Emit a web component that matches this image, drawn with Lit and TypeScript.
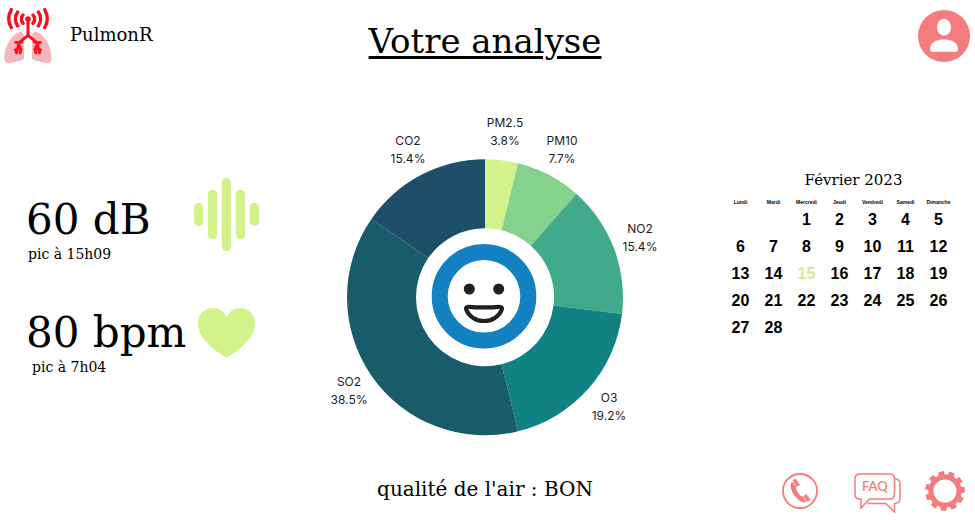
import { LitElement, html, svg, css } from "lit";
import { customElement } from "lit/decorators.js";
import { classMap } from "lit/directives/class-map.js";

interface Slice {
  name: string;
  share: number;
  label: string;
  color: string;
  x: number;
  y: number;
}

const SLICES: Slice[] = [
  { name: "PM2.5", share: 1, label: "3.8%", color: "#d1f389", x: 505, y: 127 },
  { name: "PM10", share: 2, label: "7.7%", color: "#84d28b", x: 562, y: 145 },
  { name: "NO2", share: 4, label: "15.4%", color: "#40ab8b", x: 640, y: 233 },
  { name: "O3", share: 5, label: "19.2%", color: "#118282", x: 609, y: 402 },
  { name: "SO2", share: 10, label: "38.5%", color: "#185b6b", x: 349, y: 386 },
  { name: "CO2", share: 4, label: "15.4%", color: "#1d4e6a", x: 408, y: 145 },
];

@customElement("air-chart")
class AirChart extends LitElement {
  static styles = css`
    :host {
      display: block;
    }
    .chart {
      display: block;
      width: 100%;
    }
    .label {
      font: 12px Inter, "Open Sans", sans-serif;
      text-anchor: middle;
      fill: #1c1c1c;
    }
    .line {
      fill: none;
      stroke: #221f20;
      stroke-width: 4.2;
      stroke-linejoin: round;
    }
    .eye {
      fill: #221f20;
    }
    .ring {
      fill: none;
      stroke: #1281c2;
      stroke-width: 16;
    }
  `;

  private slicePaths() {
    const cx = 485;
    const cy = 297.3;
    const total = SLICES.reduce((sum, s) => sum + s.share, 0);
    const at = (v: number, r: number) => {
      const a = (v / total) * 2 * Math.PI;
      return `${(cx + r * Math.sin(a)).toFixed(2)} ${(cy - r * Math.cos(a)).toFixed(2)}`;
    };
    let start = 0;
    return SLICES.map((s) => {
      const end = start + s.share;
      const d = `M${at(start, 69)}L${at(start, 138)}A138 138 0 0 1 ${at(end, 138)}L${at(end, 69)}A69 69 0 0 0 ${at(start, 69)}Z`;
      start = end;
      return svg`<path d=${d} fill=${s.color} />`;
    });
  }

  render() {
    return html`
      <svg class="chart" viewBox="310 110 350 330" role="img" aria-label="Composition de l'air">
        ${this.slicePaths()}
        ${SLICES.map(
          (s) => svg`
            <text class="label" x=${s.x} y=${s.y}>${s.name}</text>
            <text class="label" x=${s.x} y=${s.y + 18}>${s.label}</text>`
        )}
        <circle class="ring" cx="484" cy="296.3" r="44.3" />
        <circle class="eye" cx="469.3" cy="289" r="5.5" />
        <circle class="eye" cx="498.7" cy="289" r="5.5" />
        <path class="line" d="M468.5 306.8C478 307.6 490 307.6 499.5 306.8C501.5 306.7 502.4 308 501.7 309.8C498.5 317 491.5 321 484 321S469.5 317 466.3 309.8C465.6 308 466.5 306.7 468.5 306.8Z" />
      </svg>
    `;
  }
}

const DAYS = ["Lundi", "Mardi", "Mercredi", "Jeudi", "Vendredi", "Samedi", "Dimanche"];

@customElement("month-calendar")
class MonthCalendar extends LitElement {
  static styles = css`
    :host {
      display: block;
    }
    .month {
      width: 100%;
      table-layout: fixed;
      border-collapse: collapse;
      font-family: "Liberation Sans", Arial, sans-serif;
      font-weight: bold;
      text-align: center;
    }
    .title {
      font: 15px/20px "DejaVu Serif", serif;
      padding: 0 0 8px 28px;
    }
    th {
      padding: 0;
      font-size: 5px;
      line-height: 8px;
      height: 8px;
    }
    td {
      padding: 0;
      font-size: 16px;
      line-height: 27px;
      height: 27px;
    }
    .today {
      color: #d5ee8c;
    }
  `;

  render() {
    const offset = 2;
    const weeks = [0, 1, 2, 3, 4].map((w) =>
      DAYS.map((_, d) => w * 7 + d + 1 - offset).map((n) => (n >= 1 && n <= 28 ? n : null))
    );
    return html`
      <table class="month">
        <caption class="title">Février 2023</caption>
        <thead>
          <tr>${DAYS.map((d) => html`<th scope="col">${d}</th>`)}</tr>
        </thead>
        <tbody>
          ${weeks.map(
            (week) => html`<tr>
              ${week.map((n) => html`<td class=${classMap({ today: n === 15 })}>${n}</td>`)}
            </tr>`
          )}
        </tbody>
      </table>
    `;
  }
}

/* Outline of a cog with eleven flared teeth and a round hole. */
function gearPath(): string {
  const teeth = 11;
  const step = (2 * Math.PI) / teeth;
  const pt = (a: number, r: number) =>
    `${(20 + r * Math.sin(a)).toFixed(2)} ${(20 + r * Math.cos(a)).toFixed(2)}`;
  let d = "";
  for (let i = 0; i < teeth; i++) {
    const a = i * step - 0.08;
    d += `${i ? "L" : "M"}${pt(a - 0.19, 16.6)}L${pt(a - 0.14, 20)}L${pt(a + 0.14, 20)}L${pt(a + 0.19, 16.6)}`;
  }
  return d + "ZM31.5 20A11.5 11.5 0 1 0 8.5 20A11.5 11.5 0 1 0 31.5 20Z";
}

@customElement("app-root")
class AppRoot extends LitElement {
  static styles = css`
    :host {
      display: block;
      background: #fff;
      color: #000;
      font-family: "DejaVu Serif", serif;
    }
    .page {
      padding: 8px 5px 4px 0;
    }
    .bar {
      display: grid;
      grid-template-columns: 1fr auto 1fr;
      align-items: center;
    }
    .brand {
      display: flex;
      align-items: center;
      gap: 18px;
      padding-left: 4px;
      color: inherit;
      text-decoration: none;
      font-size: 18px;
      line-height: 24px;
    }
    .name {
      padding-bottom: 2px;
    }
    h1 {
      margin: 0;
      font-size: 34px;
      line-height: 46px;
      padding-top: 10px;
      font-weight: normal;
      text-decoration: underline;
      text-decoration-thickness: 3px;
      text-underline-offset: 3px;
    }
    svg {
      display: block;
    }
    button {
      display: block;
      padding: 0;
      border: 0;
      background: none;
      color: #f47c7c;
      cursor: pointer;
    }
    .profile {
      justify-self: end;
    }
    .main {
      display: grid;
      grid-template-columns: 1fr minmax(200px, 350px) 1fr;
      align-items: start;
      padding-top: 46px;
    }
    .metrics {
      display: flex;
      flex-direction: column;
      gap: 28px;
      padding: 68px 0 0 26px;
    }
    .metric {
      display: flex;
      align-items: flex-start;
      gap: 8px;
    }
    .reading {
      width: 160px;
      padding-top: 17px;
      white-space: nowrap;
    }
    .value {
      margin: 0;
      font-size: 42px;
      line-height: 50px;
      font-weight: normal;
    }
    .peak {
      margin: 0;
      padding-left: 2px;
      font-size: 14px;
      line-height: 18px;
    }
    .indent {
      padding-left: 6px;
    }
    .calendar {
      justify-self: end;
      width: 231px;
      padding: 60px 15px 0 0;
    }
    .quality {
      grid-column: 2;
      margin: 0;
      padding-bottom: 4px;
      font-size: 20px;
      line-height: 28px;
    }
    .footer {
      padding-top: 28px;
    }
    .actions {
      justify-self: end;
      display: flex;
      align-items: center;
      gap: 24px;
      padding-right: 5px;
    }
    .call {
      margin-right: 12px;
    }
    .faq {
      font: 600 13px Lato, sans-serif;
      fill: #f47c7c;
    }
  `;

  private lungs() {
    const side = svg`
      <path d="M58 98C67 96 71 104 71 116V174C71 182 66 183 58 184C46 186 38 191 25 191C16 191 12 187 12 178C12 146 32 104 58 98Z" fill="#f4b5bd" />
      <g fill="none" stroke="#fb0d1b" stroke-linecap="round" stroke-linejoin="round">
        <path d="M83 108L56 130L48 161M46 129L56 131L64 128M58 140L62 150L59 161M54 147L45 152" stroke-width="8.5" />
        <path d="M68 47C62 54 62 64 68 72M52 38C43 50 43 68 52 80M33 31C23 48 23 68 33 85" stroke-width="10" />
      </g>`;
    return html`
      <svg width="48" height="56" viewBox="11 26 144 168" aria-hidden="true">
        ${side}
        <g transform="translate(166 0) scale(-1 1)">${side}</g>
        <path d="M83 60V110" stroke="#fb0d1b" stroke-width="9" />
        <circle cx="83" cy="59" r="8.5" fill="#fb0d1b" />
      </svg>
    `;
  }

  private wave() {
    return html`
      <svg width="65" height="74" viewBox="0 0 65 74" fill="#d1f389" aria-hidden="true">
        <rect x="0" y="24.7" width="9.3" height="23.3" rx="4.65" />
        <rect x="14" y="11.7" width="9.3" height="49.6" rx="4.65" />
        <rect x="27.7" y="0" width="9.3" height="73" rx="4.65" />
        <rect x="41.7" y="11.7" width="9.3" height="49.6" rx="4.65" />
        <rect x="55.7" y="24.7" width="9.3" height="23.3" rx="4.65" />
      </svg>
    `;
  }

  private heart() {
    return html`
      <svg width="65" height="74" viewBox="0 0 65 74" fill="#d1f389" aria-hidden="true">
        <path d="M32.5 26C29.5 20 24.5 17 18.5 17C10 17 4 24 4 32C4 45 15 56 32.5 67C50 56 61 45 61 32C61 24 55 17 46.5 17C40.5 17 35.5 20 32.5 26Z" />
      </svg>
    `;
  }

  render() {
    return html`
      <div class="page">
        <header class="bar">
          <a class="brand" href="#">${this.lungs()}<span class="name">PulmonR</span></a>
          <h1>Votre analyse</h1>
          <button class="profile" type="button" aria-label="Profil">
            <svg width="52" height="52" viewBox="0 0 52 52">
              <circle cx="26" cy="26" r="26" fill="currentColor" />
              <ellipse cx="26" cy="17.3" rx="7" ry="8.5" fill="#fff" />
              <path d="M12 39.5C12 33 18 29.3 26 29.3S40 33 40 39.5Q40 41.7 38 41.7H14Q12 41.7 12 39.5Z" fill="#fff" />
            </svg>
          </button>
        </header>

        <main class="main">
          <section class="metrics">
            <div class="metric">
              <div class="reading">
                <h2 class="value">60 dB</h2>
                <p class="peak">pic à 15h09</p>
              </div>
              ${this.wave()}
            </div>
            <div class="metric">
              <div class="reading">
                <h2 class="value">80 bpm</h2>
                <p class="peak indent">pic à 7h04</p>
              </div>
              ${this.heart()}
            </div>
          </section>
          <air-chart></air-chart>
          <month-calendar class="calendar"></month-calendar>
        </main>

        <footer class="bar footer">
          <p class="quality">qualité de l'air : BON</p>
          <div class="actions">
            <button class="call" type="button" aria-label="Appeler">
              <svg width="36" height="36" viewBox="0 0 36 36">
                <circle cx="18" cy="18" r="17" fill="none" stroke="currentColor" stroke-width="1.8" />
                <path d="M10 8.6C7.5 11.5 8.6 17.4 12.4 22.4C16.4 27.700 21.2 30.5 24.5 29L21 23.4C19.2 24 17.4 22 15.8 19.6C14.4 17.4 13.6 15 14.3 13.6Z" fill="currentColor" />
                <path d="M11 7.5L13.7 6L17.6 11.8L14.8 13.5ZM21.7 23L24.4 21.4L28 26.8L25.3 28.6Z" fill="currentColor" stroke="currentColor" stroke-width=".6" stroke-linejoin="round" />
              </svg>
            </button>
            <button type="button" aria-label="FAQ">
              <svg width="47" height="46" viewBox="0 -5 47 46">
                <path d="M41 5.5Q46 6.5 46 11V25Q46 30.5 40.5 30.5V39L31.5 30.5H13.5" fill="none" stroke="currentColor" stroke-width="1.5" />
                <path d="M5.5 1H35.5Q40.5 1 40.5 6V21Q40.5 26 35.5 26H15.5L7 35V26H5.5Q1 26 1 21V6Q1 1 5.5 1Z" fill="#fff" stroke="currentColor" stroke-width="1.5" />
                <text class="faq" x="8" y="18">FAQ</text>
              </svg>
            </button>
            <button type="button" aria-label="Paramètres">
              <svg width="40" height="40" viewBox="0 0 40 40">
                <path d=${gearPath()} fill="currentColor" fill-rule="evenodd" />
              </svg>
            </button>
          </div>
        </footer>
      </div>
    `;
  }
}
